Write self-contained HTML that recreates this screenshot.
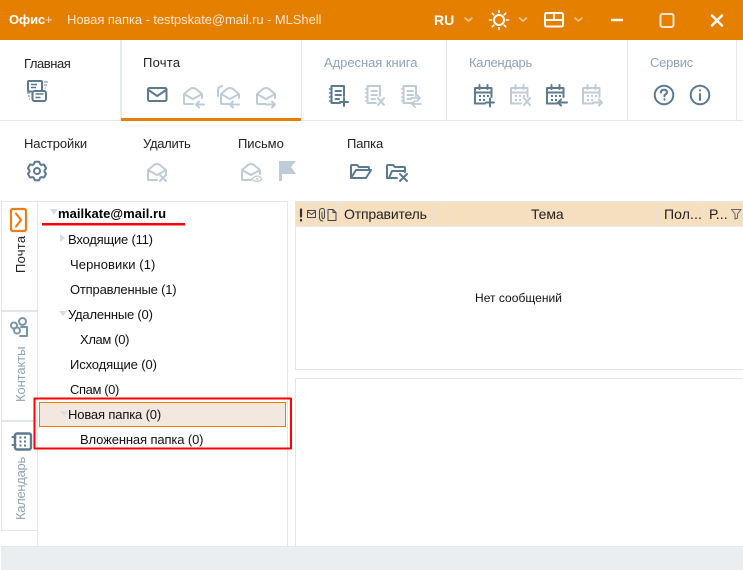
<!DOCTYPE html>
<html><head><meta charset="utf-8"><style>
html,body{margin:0;padding:0;background:#fff;width:743px;height:570px;overflow:hidden}
body{position:relative;font-family:"Liberation Sans","Noto Sans CJK SC",sans-serif;font-size:13px;color:#111}
.a{position:absolute}
.t{position:absolute;white-space:nowrap;line-height:16px}
.r{color:#222}
.g{color:#8ea3b4}
.v{position:absolute;white-space:nowrap;line-height:16px;transform-origin:0 0;transform:rotate(-90deg)}
svg{position:absolute;left:0;top:0}
</style></head><body>
<div class="a" style="left:0;top:0;width:743px;height:40px;background:#e47f00"></div>
<div class="a" style="left:0;top:120px;width:743px;height:1px;background:#e1e7ec"></div>
<div class="a" style="left:120px;top:40px;width:2px;height:80px;background:#e6ebef"></div>
<div class="a" style="left:301px;top:40px;width:1px;height:80px;background:#e1e7ec"></div>
<div class="a" style="left:446px;top:40px;width:1px;height:80px;background:#e1e7ec"></div>
<div class="a" style="left:627px;top:40px;width:1px;height:80px;background:#e1e7ec"></div>
<div class="a" style="left:736px;top:40px;width:1px;height:80px;background:#e1e7ec"></div>
<div class="a" style="left:121px;top:118px;width:180px;height:3px;background:#e47f00"></div>

<div class="a" style="left:1px;top:201px;width:36px;height:345px;border-top:1px solid #e1e7ec"></div>
<div class="a" style="left:1px;top:201px;width:1px;height:329px;background:#e1e7ec"></div>
<div class="a" style="left:1px;top:310px;width:36px;height:2px;background:#e1e7ec"></div>
<div class="a" style="left:1px;top:420px;width:36px;height:2px;background:#e1e7ec"></div>
<div class="a" style="left:1px;top:530px;width:36px;height:1px;background:#e1e7ec"></div>
<div class="a" style="left:37px;top:201px;width:249px;height:345px;border:1px solid #e1e7ec;border-bottom:0"></div>
<div class="a" style="left:295px;top:201px;width:448px;height:167px;border:1px solid #e1e7ec;border-right:0"></div>
<div class="a" style="left:296px;top:202px;width:447px;height:24px;background:#f6dfbe;border-bottom:1px solid #e6eaee"></div>
<div class="a" style="left:295px;top:378px;width:448px;height:168px;border:1px solid #e1e7ec;border-right:0;border-bottom:0"></div>
<div class="a" style="left:1px;top:546px;width:742px;height:24px;background:#ebeef1;border-top:1px solid #e1e7ec;box-sizing:border-box"></div>
<div class="a" style="left:305px;top:202px;width:1px;height:24px;background:#e6e4dc"></div>
<div class="a" style="left:316px;top:202px;width:1px;height:24px;background:#e6e4dc"></div>
<div class="a" style="left:326px;top:202px;width:1px;height:24px;background:#e6e4dc"></div>
<div class="a" style="left:336px;top:202px;width:1px;height:24px;background:#e6e4dc"></div>
<div class="a" style="left:434px;top:202px;width:1px;height:24px;background:#e6e4dc"></div>
<div class="a" style="left:658px;top:202px;width:1px;height:24px;background:#e6e4dc"></div>
<div class="a" style="left:703px;top:202px;width:1px;height:24px;background:#e6e4dc"></div>
<div class="a" style="left:730px;top:202px;width:1px;height:24px;background:#e6e4dc"></div>

<div class="a" style="left:39px;top:402px;width:245px;height:23px;background:#f3e8df;border:1px solid #e47f00"></div>

<svg width="743" height="570" viewBox="0 0 743 570" fill="none" stroke-linecap="round" stroke-linejoin="round">
<defs>
<symbol id="eo" overflow="visible"><path d="M1 8L7 3Q10 1 13 3L19 8V12M1 8V17Q1 18 2 18H10M1 8L10 13L19 8" fill="none" stroke-width="2"/></symbol>
<symbol id="nb" overflow="visible"><path d="M2.500 1H15V11M2.500 1V18H11M6.500 6H12M6.500 10H12M6.500 14H10" fill="none" stroke-width="2"/><path d="M0.500 4H3M0.500 8H3M0.500 12H3M0.500 16H3" fill="none" stroke-width="1.500"/></symbol>
<symbol id="cal" overflow="visible"><path d="M1 4H17.500V13M1 4V19.500H11M1 8.500H17.500M5.500 1V5M13.500 1V5" fill="none" stroke-width="2"/><path d="M5 12h2M9 12h2M13 12h2M5 16h2M9 16h2" fill="none" stroke-width="2" stroke-linecap="butt"/></symbol>
</defs>

<!-- title controls -->
<g stroke="#fff" fill="none">
<path d="M465 18l3.500 3 3.500-3M519.500 18l3.500 3 3.500-3M575 18l3.500 3 3.500-3" stroke="#f5c98f" stroke-width="1.500"/>
<circle cx="499" cy="20" r="5" stroke-width="2"/>
<path d="M499 10.500v2M499 27.500v2M489.500 20h2M506.500 20h2M492.300 13.300l1.500 1.500M504.200 25.200l1.500 1.500M492.300 26.700l1.500-1.500M504.200 14.800l1.500-1.500" stroke-width="1.600"/>
<rect x="545" y="13" width="18" height="13.500" rx="1.500" stroke-width="2"/>
<path d="M545 20h18M554 13v7" stroke-width="2"/>
<path d="M611 20h12" stroke-width="2.400" stroke-linecap="butt"/>
<rect x="660.500" y="14" width="13" height="13" rx="2" stroke-width="2" stroke="#fbe6cc"/>
<path d="M712 15.500l10 10M722 15.500l-10 10" stroke-width="2.400"/>
</g>

<!-- Главная -->
<g stroke="#5b7a90">
<path d="M32 91.500H29Q28 91.500 28 90V82Q28 81 29 81H41Q42 81 42 82V90" stroke-width="2"/>
<rect x="32.500" y="91" width="13.500" height="10" rx="2" fill="#fff" stroke-width="2"/>
<path d="M31 84.500h6M31 87.500h5M35.500 94h8M35.500 97.500h5" stroke-width="1.500" stroke-linecap="butt"/>
<path d="M44 82h4M44 85h3M45 88h1M27 93h3M28 96h2M29 99h1" stroke-width="1.300" stroke="#8299aa" stroke-linecap="butt"/>
</g>
<!-- Почта -->
<g stroke="#5b7a90" stroke-width="2"><rect x="148" y="88" width="18.500" height="13" rx="1.500"/><path d="M148.500 90L157.200 96L166 90"/></g>
<g stroke="#c0ccd5">
<use href="#eo" x="183" y="86"/><path d="M196 104.500h8M199 101.500l-3 3 3 3" stroke-width="2"/>
<use href="#eo" x="220" y="86"/><path d="M218 96V90Q218 87 222 86M230 104.500h9M233 101.500l-3 3 3 3" stroke-width="2"/>
<use href="#eo" x="256" y="86"/><path d="M266 104.500h9M272 101.500l3 3-3 3" stroke-width="2"/>
</g>
<!-- Адресная -->
<g stroke="#5b7a90"><use href="#nb" x="329" y="85"/><path d="M340 102h8M344 98v8" stroke-width="2"/></g>
<g stroke="#c0ccd5"><use href="#nb" x="365" y="85"/><path d="M378 98l6 7M384 98l-6 7" stroke-width="2"/>
<use href="#nb" x="401" y="85"/><path d="M411 98h9M417 95l3 3-3 3M421 104h-9M415 101l-3 3 3 3" stroke-width="1.800"/></g>
<!-- Календарь -->
<g stroke="#5b7a90"><use href="#cal" x="474" y="84"/><path d="M486 102.500h8M490 98.500v8" stroke-width="2"/></g>
<g stroke="#c0ccd5"><use href="#cal" x="510" y="84"/><path d="M524 98l6 7M530 98l-6 7" stroke-width="2"/></g>
<g stroke="#5b7a90"><use href="#cal" x="546" y="84"/><path d="M558 102.500h9M561 99.500l-3 3 3 3" stroke-width="2"/></g>
<g stroke="#c0ccd5"><use href="#cal" x="582" y="84"/><path d="M593 102.500h9M599 99.500l3 3-3 3" stroke-width="2"/></g>
<!-- Сервис -->
<g stroke="#5b7a90" stroke-width="2">
<circle cx="664" cy="95" r="9.300"/><path d="M661 92.500Q661 89.800 664 89.800Q667 89.800 667 92.300Q667 93.800 664.500 95V96.300"/><path d="M664.500 99.300v.4"/>
<circle cx="700" cy="95" r="9.300"/><path d="M700 94v6M700 90.200v.4"/>
</g>

<!-- Row 2 -->
<g stroke="#5b7a90" stroke-width="2" transform="translate(37 171)">
<path d="M-2.140-9.260L2.140-9.260L3.170-6.800L4.300-6.140L6.950-6.480L9.080-2.780L7.470-.65L7.470.65L9.080 2.780L6.950 6.480L4.300 6.140L3.170 6.800L2.140 9.260L-2.140 9.260L-3.170 6.800L-4.300 6.140L-6.950 6.480L-9.080 2.780L-7.470.65L-7.470-.65L-9.080-2.780L-6.950-6.480L-4.300-6.140L-3.170-6.800Z"/>
<circle cx="0" cy="0" r="3"/>
</g>
<g stroke="#c0ccd5"><use href="#eo" x="147" y="162"/><path d="M160 175l6 6M166 175l-6 6" stroke-width="2"/></g>
<g stroke="#c0ccd5"><use href="#eo" x="241" y="162"/><path d="M252 179Q257 173 262 179Q257 184 252 179Z" stroke-width="1.300"/><circle cx="257" cy="179" r="1" fill="#c0ccd5" stroke="none"/></g>
<path d="M279 161H296L291 167L296 174H282V181H279Z" fill="#c0ccd5"/>
<g stroke="#5b7a90" stroke-width="2">
<path d="M351 177V166Q351 165 352 165H357L359 167H368Q369 167 369 168V170M351 178H366L371 170H356L351 178Z"/>
<path d="M387 177V166Q387 165 388 165H393L395 167H404Q405 167 405 168V172M387 178H397"/><path d="M389 178L392 171H404"/>
<path d="M400 174l7 7M407 174l-7 7"/>
</g>

<!-- sidebar icons -->
<path d="M13 209H24Q26 209 26 211V229Q26 231 24 231H13Q11 231 11 229V211Q11 209 13 209Z" stroke="#ea7f17" stroke-width="2.200"/>
<path d="M16 213.500L21 220L16 226.500" stroke="#ea7f17" stroke-width="2.200"/>
<g stroke="#7a94a6" stroke-width="2">
<circle cx="14" cy="325.500" r="3"/><circle cx="17" cy="330.500" r="3"/>
<circle cx="22.500" cy="321.500" r="3.500"/>
<path d="M21 327H27V336H20"/>
</g>
<g stroke="#5b7a90">
<rect x="15" y="433.500" width="16" height="16" rx="2" stroke-width="2.400"/>
<path d="M12.500 437h3M12.500 445h3" stroke-width="2"/>
<path d="M19.500 437.500h2M24 437.500h2M19.500 441.500h2M24 441.500h2M19.500 445.500h2M24 445.500h2" stroke-width="2" stroke-linecap="butt"/>
</g>

<!-- list header icons -->
<path d="M301 209.500v7M301 220v.5" stroke="#333" stroke-width="2.200"/>
<g stroke="#444" stroke-width="1">
<rect x="307.500" y="210.500" width="8" height="7"/><path d="M307.500 211.500L311.500 214.500L315.500 211.500"/>
<path d="M322 212V216.500Q322 218.500 323 218.500Q324.500 218.500 324.500 216.500V211Q324.500 208.500 322.500 208.500Q319.500 208.500 319.500 211V218Q320 221 322.800 221"/>
<path d="M328 209.500H333L336 212.500V220.500H328Z"/><path d="M333 209.500V212.500H336"/>
<path d="M731.500 209.500H741L737.500 214V218L735 219V214Z" stroke="#666"/>
</g>

<!-- tree arrows -->
<path d="M50 209H58L54 215Z" fill="#d5dce2"/>
<path d="M60 234V242L65 238Z" fill="#d5dce2"/>
<path d="M59 311H67L63 316Z" fill="#d5dce2"/>
<path d="M60 411H68L64 416Z" fill="#d9dee2"/>

<!-- red -->
<rect x="42" y="223" width="143" height="2.500" fill="#ff0000"/>
<rect x="34.500" y="398.500" width="256.500" height="50" stroke="#ff0000" stroke-width="2" stroke-linecap="butt"/>
</svg>

<div class="t" style="left:9px;top:12px;color:#fff;font-weight:bold;letter-spacing:-.2px">Офис<span style="font-weight:normal;color:#fbe0bd">+</span></div>
<div class="t" style="left:67px;top:12px;color:#fbe6cc;letter-spacing:-.07px">Новая папка - testpskate@mail.ru - MLShell</div>
<div class="t" style="left:434px;top:12px;color:#fff;font-weight:bold;font-size:14px;letter-spacing:0">RU</div>

<div class="t r" style="left:24px;top:56px;letter-spacing:-.45px">Главная</div>
<div class="t r" style="left:143px;top:55px;letter-spacing:.25px">Почта</div>
<div class="t g" style="left:324px;top:55px;letter-spacing:-.05px">Адресная книга</div>
<div class="t g" style="left:469px;top:55px;letter-spacing:-.3px">Календарь</div>
<div class="t g" style="left:650px;top:55px;letter-spacing:-.25px">Сервис</div>
<div class="t r" style="left:24px;top:136px;letter-spacing:-.08px">Настройки</div>
<div class="t r" style="left:143px;top:136px;letter-spacing:-.3px">Удалить</div>
<div class="t r" style="left:238px;top:136px;letter-spacing:-.05px">Письмо</div>
<div class="t r" style="left:347px;top:136px;letter-spacing:-.15px">Папка</div>

<div class="t" style="left:58px;top:206px;font-weight:bold;color:#000;letter-spacing:.05px">mailkate@mail.ru</div>
<div class="t" style="left:68px;top:232px;letter-spacing:-.2px">Входящие (11)</div>
<div class="t" style="left:70px;top:257px;letter-spacing:.1px">Черновики (1)</div>
<div class="t" style="left:70px;top:282px;letter-spacing:-.19px">Отправленные (1)</div>
<div class="t" style="left:68px;top:307px;letter-spacing:-.2px">Удаленные (0)</div>
<div class="t" style="left:80px;top:332px;letter-spacing:-.35px">Хлам (0)</div>
<div class="t" style="left:70px;top:357px;letter-spacing:-.13px">Исходящие (0)</div>
<div class="t" style="left:70px;top:382px;letter-spacing:-.4px">Спам (0)</div>
<div class="t" style="left:68px;top:407px;letter-spacing:-.15px">Новая папка (0)</div>
<div class="t" style="left:80px;top:432px;letter-spacing:-.12px">Вложенная папка (0)</div>

<div class="t" style="left:344px;top:206px;color:#222;font-size:14px;letter-spacing:-.18px">Отправитель</div>
<div class="t" style="left:531px;top:206px;color:#222;font-size:14px;letter-spacing:-.1px">Тема</div>
<div class="t" style="left:664px;top:206px;color:#222;font-size:14px;letter-spacing:.1px">Пол...</div>
<div class="t" style="left:709px;top:206px;color:#222;font-size:14px;letter-spacing:.1px">Р...</div>
<div class="t" style="left:475px;top:290px;font-size:12px;color:#111;letter-spacing:.03px">Нет сообщений</div>

<div class="v" style="left:13px;top:273px;color:#222;letter-spacing:.25px">Почта</div>
<div class="v" style="left:13px;top:402px;color:#8ea3b4;letter-spacing:-.1px">Контакты</div>
<div class="v" style="left:13px;top:520px;color:#8ea3b4;letter-spacing:-.3px">Календарь</div>
</body></html>
